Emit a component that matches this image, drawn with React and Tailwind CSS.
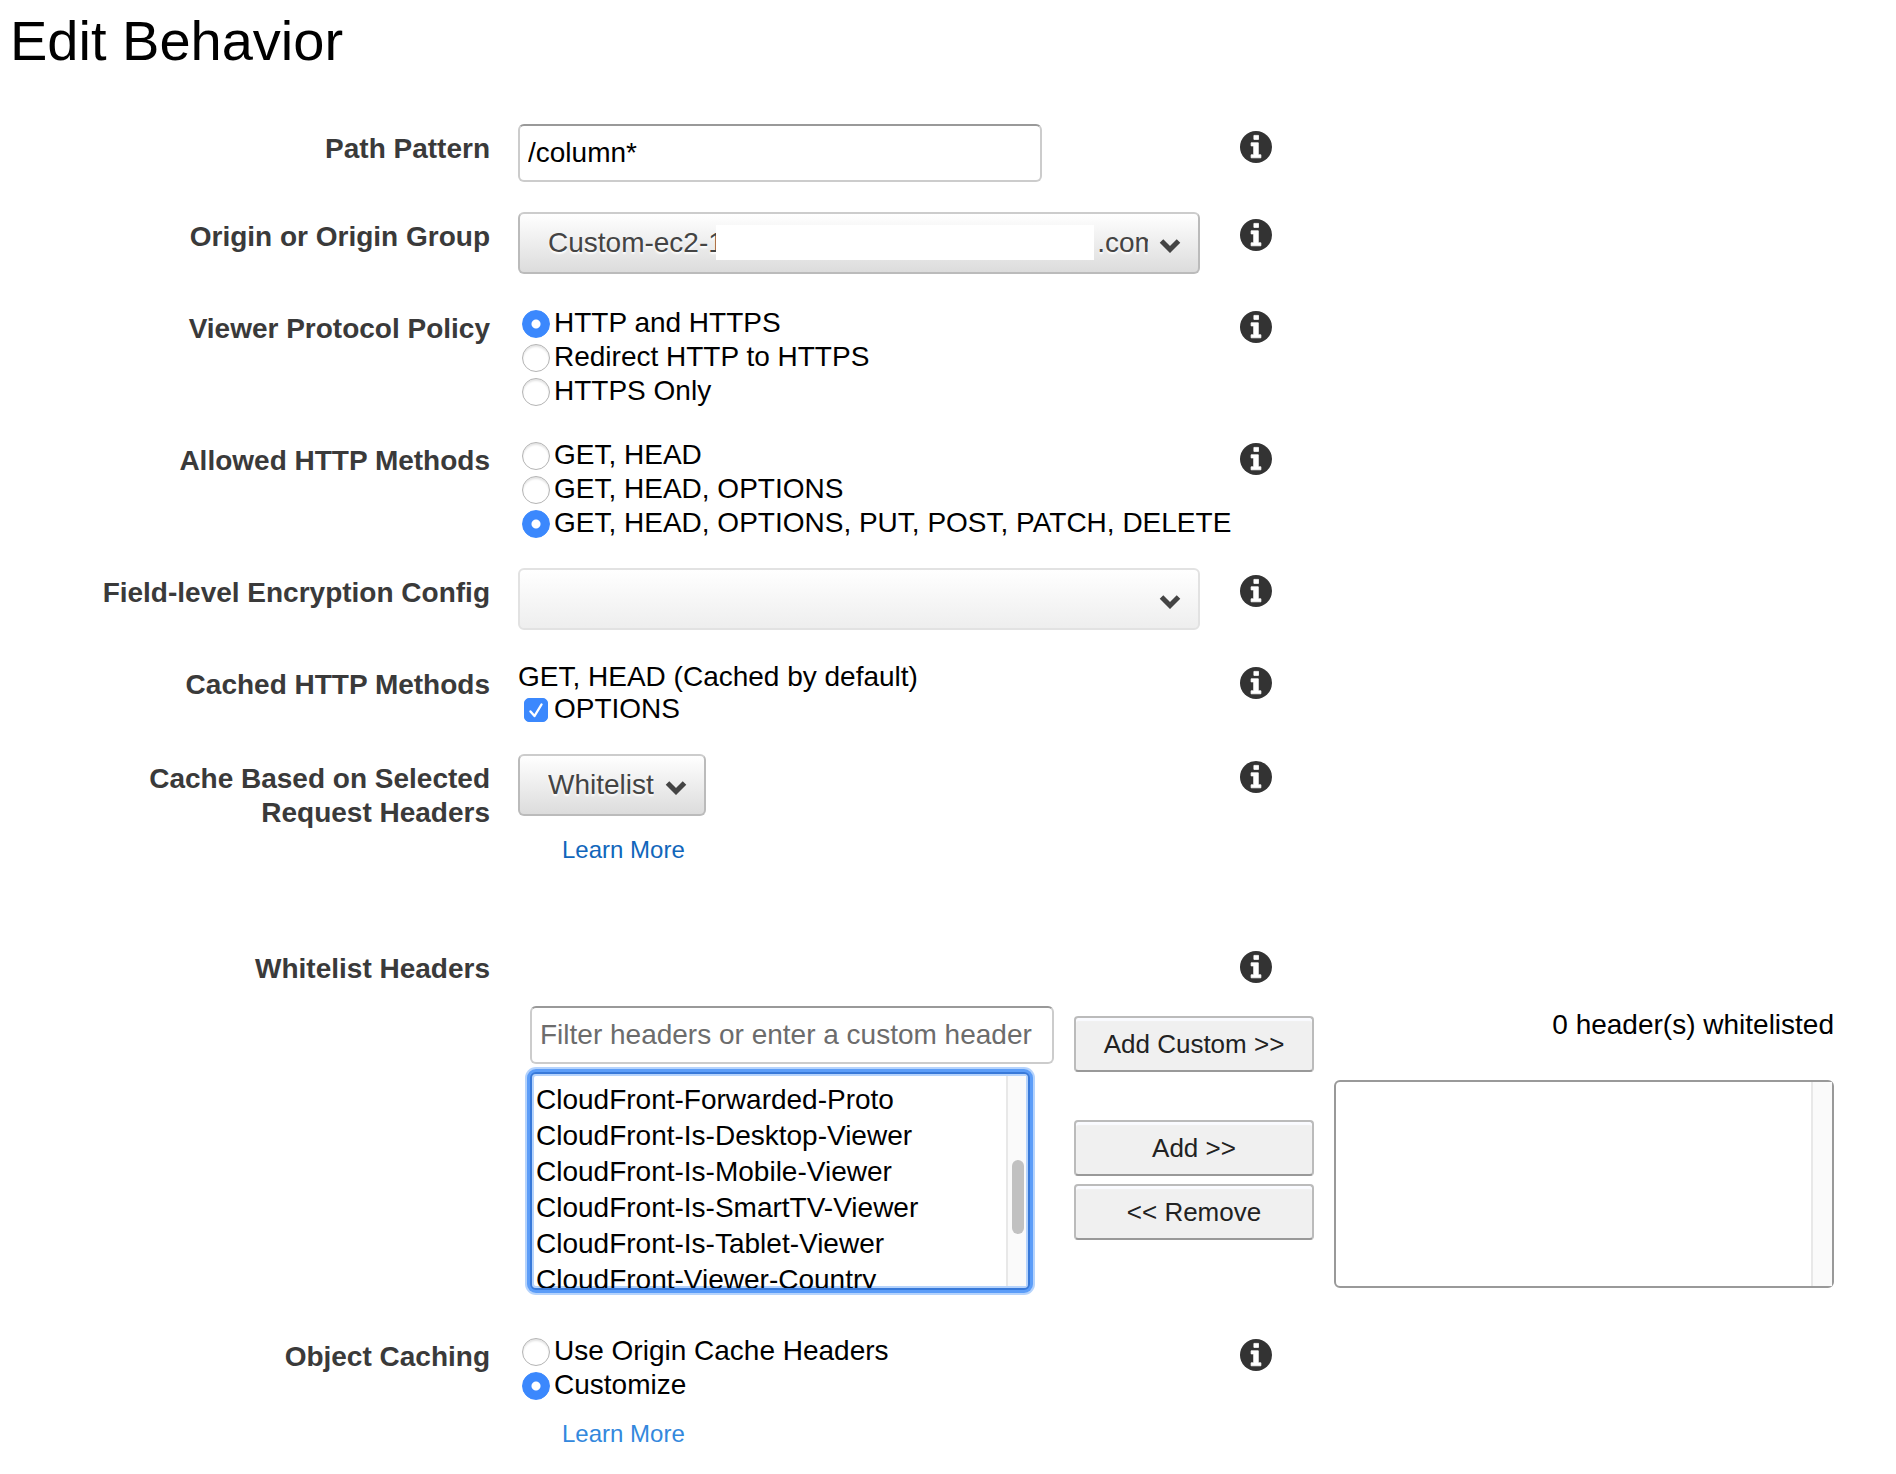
import { useEffect, useRef } from "react";

const HEADERS = [
  "Accept",
  "Accept-Charset",
  "Accept-Datetime",
  "Accept-Encoding",
  "Accept-Language",
  "Authorization",
  "CloudFront-Forwarded-Proto",
  "CloudFront-Is-Desktop-Viewer",
  "CloudFront-Is-Mobile-Viewer",
  "CloudFront-Is-SmartTV-Viewer",
  "CloudFront-Is-Tablet-Viewer",
  "CloudFront-Viewer-Country",
  "Host",
  "Origin",
  "Referer",
];

function InfoButton({ topic }) {
  return (
    <button type="button" aria-label={`About ${topic}`} className="mt-[7px] block h-8 w-8">
      <svg viewBox="0 0 32 32" className="h-8 w-8">
        <circle cx="16" cy="16" r="16" fill="#333" />
        <path
          d="M13.9 4.4h4.6v4h-4.6zM11.1 11.8h7.2v12h2.6V26.8H11.1v-3h2.6v-8.9h-2.6z"
          fill="#fff"
          stroke="#fff"
          strokeWidth="0.8"
          strokeLinejoin="round"
        />
      </svg>
    </button>
  );
}

function Row({ label, htmlFor, children, className = "mb-[30px]" }) {
  return (
    <div
      role="group"
      aria-label={label}
      className={`grid grid-cols-[minmax(0,490px)_minmax(0,694px)_32px] gap-x-7 ${className}`}
    >
      <label
        htmlFor={htmlFor}
        className="pt-2 pl-[100px] text-right font-bold leading-[34px] text-[#3a3a3a]"
      >
        {label}
      </label>
      <div className="min-w-0">{children}</div>
      <InfoButton topic={label} />
    </div>
  );
}

function RadioList({ name, options, selected }) {
  return (
    <div>
      {options.map((text) => (
        <label key={text} className="flex h-[34px] items-center gap-1 whitespace-nowrap pl-1">
          <input
            type="radio"
            name={name}
            defaultChecked={text === selected}
            className="mt-[6px] h-7 w-7 shrink-0 appearance-none rounded-full border border-[#b4b4b4] bg-white shadow-[inset_0_2px_2px_#e4e4e4] checked:border-[#3b88fd] checked:bg-[radial-gradient(circle,#fff_4px,#3b88fd_5px)] checked:shadow-none"
          />
          <span className="pt-[3px]">{text}</span>
        </label>
      ))}
    </div>
  );
}

function Dropdown({ id, disabled, options, className, children }) {
  return (
    <div className={`relative ${className}`}>
      <select
        id={id}
        disabled={disabled}
        className="block h-[62px] w-full appearance-none rounded-md border-2 border-[#bbb] border-t-[#ccc] bg-linear-to-b from-white to-[#dcdcdc] pr-[50px] pl-7 text-[#444] opacity-100 [text-shadow:0_2px_2px_#fff] disabled:border-[#e2e2e2] disabled:to-[#eee]"
      >
        {options.map((o) => (
          <option key={o}>{o}</option>
        ))}
      </select>
      {children}
      <svg
        viewBox="0 0 22 15"
        className="pointer-events-none absolute top-[26px] right-[19px] h-[15px] w-[22px]"
      >
        <path d="M2.5 3 L11 11.5 L19.5 3" fill="none" stroke="#444" strokeWidth="5" />
      </svg>
    </div>
  );
}

const fieldClass =
  "block h-[58px] w-full max-w-[524px] rounded-md border-2 border-[#ccc] border-t-[#999] bg-white px-2 placeholder:text-[#6c6c6c] placeholder:opacity-100";

const buttonClass =
  "h-14 w-full rounded border-2 border-[#bbb] border-b-[#999] bg-[#f0f0f0] pt-px text-[26px] text-[#222] shadow-[inset_0_3px_1px_#fafbff]";

const listClass = "block w-full overflow-y-scroll rounded-md border-2 bg-white p-0 text-black";

function HeaderPicker() {
  const listRef = useRef(null);
  useEffect(() => {
    listRef.current.scrollTop = 206;
  }, []);
  return (
    <div className="mb-[42px] flex pt-5 pl-[530px]">
      <div className="w-[524px]">
        <input
          type="text"
          id="header-filter"
          aria-label="Filter headers"
          placeholder="Filter headers or enter a custom header"
          className={fieldClass}
        />
        <div className="relative mt-2 w-[500px]">
          <select
            ref={listRef}
            multiple
            aria-label="Available headers"
            className={`h-[218px] border-[#3879d9] shadow-[0_0_0_3px_#5c9df8,0_0_0_5px_#b5d3fc,inset_0_0_0_2px_#b5d3fc] ${listClass}`}
          >
            {HEADERS.map((h) => (
              <option key={h} className="h-9 px-1 py-0 leading-9">
                {h}
              </option>
            ))}
          </select>
          <div className="pointer-events-none absolute top-1 right-1 bottom-1 w-5 border-l-2 border-[#e8e8e8] bg-[#fafafa]">
            <div className="mt-[84px] ml-1 h-[74px] w-3 rounded-full bg-[#c1c1c1]" />
          </div>
        </div>
      </div>
      <div className="ml-5 w-60 pt-[10px]">
        <button type="button" className={buttonClass}>
          Add Custom &gt;&gt;
        </button>
        <button type="button" className={`mt-12 ${buttonClass}`}>
          Add &gt;&gt;
        </button>
        <button type="button" className={`mt-2 ${buttonClass}`}>
          &lt;&lt; Remove
        </button>
      </div>
      <div className="ml-5 w-[500px]">
        <p className="pt-0.5 text-right leading-[34px]">0 header(s) whitelisted</p>
        <div className="relative mt-[38px]">
          <select
            multiple
            aria-label="Whitelisted headers"
            className={`h-[208px] border-[#999] ${listClass}`}
          />
          <div className="pointer-events-none absolute top-0.5 right-0.5 bottom-0.5 w-[21px] border-l-2 border-[#e8e8e8] bg-[#fafafa]" />
        </div>
      </div>
    </div>
  );
}

export default function App() {
  return (
    <main className="min-h-screen overflow-hidden bg-white pb-6 font-['Liberation_Sans',Arial,sans-serif] text-[28px] text-black">
      <h1 className="pt-[9px] pl-[10px] text-[56px] leading-[64px]">Edit Behavior</h1>
      <form className="mt-[51px]">
        <Row label="Path Pattern" htmlFor="path">
          <input id="path" type="text" defaultValue="/column*" className={fieldClass} />
        </Row>
        <Row label="Origin or Origin Group" htmlFor="origin">
          <Dropdown
            id="origin"
            className="max-w-[682px]"
            options={["Custom-ec2-1" + "\u00a0".repeat(48) + ".com"]}
          >
            <span className="absolute top-[13px] left-[198px] h-[35px] w-[378px] bg-white" />
          </Dropdown>
        </Row>
        <Row label="Viewer Protocol Policy">
          <RadioList
            name="viewer"
            selected="HTTP and HTTPS"
            options={["HTTP and HTTPS", "Redirect HTTP to HTTPS", "HTTPS Only"]}
          />
        </Row>
        <Row label="Allowed HTTP Methods">
          <RadioList
            name="methods"
            selected="GET, HEAD, OPTIONS, PUT, POST, PATCH, DELETE"
            options={[
              "GET, HEAD",
              "GET, HEAD, OPTIONS",
              "GET, HEAD, OPTIONS, PUT, POST, PATCH, DELETE",
            ]}
          />
        </Row>
        <Row label="Field-level Encryption Config" htmlFor="encryption">
          <Dropdown id="encryption" disabled className="max-w-[682px]" options={[""]} />
        </Row>
        <Row label="Cached HTTP Methods">
          <p className="leading-[34px]">GET, HEAD (Cached by default)</p>
          <label className="flex h-[30px] items-center gap-[6px] pl-[6px]">
            <span className="relative mt-0.5 block h-6 w-6">
              <input
                type="checkbox"
                defaultChecked
                className="block h-6 w-6 appearance-none rounded-[5px] border border-[#b4b4b4] bg-white checked:border-[#3b88fd] checked:bg-[#3b88fd]"
              />
              <svg viewBox="0 0 24 24" className="pointer-events-none absolute inset-0 h-6 w-6">
                <path
                  d="M6.5 13.5 L10.5 18 L17.5 6.5"
                  fill="none"
                  stroke="#fff"
                  strokeWidth="2.4"
                  strokeLinecap="round"
                  strokeLinejoin="round"
                />
              </svg>
            </span>
            <span>OPTIONS</span>
          </label>
        </Row>
        <Row
          label="Cache Based on Selected Request Headers"
          htmlFor="cache-based"
          className="mb-20"
        >
          <Dropdown id="cache-based" className="w-fit" options={["Whitelist"]} />
          <a href="#headers" className="mt-5 ml-11 block w-fit text-2xl leading-7 text-[#1166bb]">
            Learn More
          </a>
        </Row>
        <Row label="Whitelist Headers" htmlFor="header-filter" className="" />
        <HeaderPicker />
        <Row label="Object Caching" className="">
          <RadioList
            name="caching"
            selected="Customize"
            options={["Use Origin Cache Headers", "Customize"]}
          />
          <a href="#caching" className="mt-5 ml-11 block w-fit text-2xl leading-7 text-[#3388dd]">
            Learn More
          </a>
        </Row>
      </form>
    </main>
  );
}
